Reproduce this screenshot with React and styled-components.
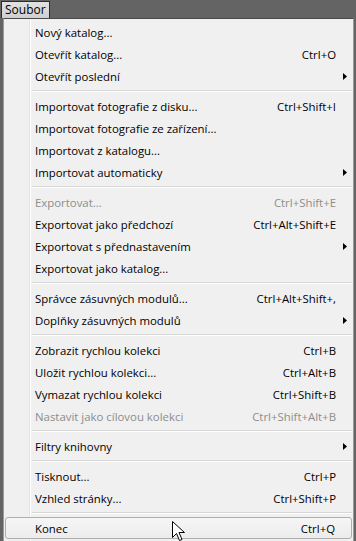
import React from "react";
import styled, { createGlobalStyle } from "styled-components";

const GlobalStyle = createGlobalStyle`
  html, body {
    margin: 0;
    padding: 0;
    background: #646464;
  }
`;

const SEP = "sep";

const items = [
  { label: "Nový katalog..." },
  { label: "Otevřít katalog...", shortcut: "Ctrl+O" },
  { label: "Otevřít poslední", sub: true },
  SEP,
  { label: "Importovat fotografie z disku...", shortcut: "Ctrl+Shift+I" },
  { label: "Importovat fotografie ze zařízení..." },
  { label: "Importovat z katalogu..." },
  { label: "Importovat automaticky", sub: true },
  SEP,
  { label: "Exportovat...", shortcut: "Ctrl+Shift+E", disabled: true },
  { label: "Exportovat jako předchozí", shortcut: "Ctrl+Alt+Shift+E" },
  { label: "Exportovat s přednastavením", sub: true },
  { label: "Exportovat jako katalog..." },
  SEP,
  { label: "Správce zásuvných modulů...", shortcut: "Ctrl+Alt+Shift+," },
  { label: "Doplňky zásuvných modulů", sub: true },
  SEP,
  { label: "Zobrazit rychlou kolekci", shortcut: "Ctrl+B" },
  { label: "Uložit rychlou kolekci...", shortcut: "Ctrl+Alt+B" },
  { label: "Vymazat rychlou kolekci", shortcut: "Ctrl+Shift+B" },
  { label: "Nastavit jako cílovou kolekci", shortcut: "Ctrl+Shift+Alt+B", disabled: true },
  SEP,
  { label: "Filtry knihovny", sub: true },
  SEP,
  { label: "Tisknout...", shortcut: "Ctrl+P" },
  { label: "Vzhled stránky...", shortcut: "Ctrl+Shift+P" },
  SEP,
  { label: "Konec", shortcut: "Ctrl+Q", hover: true },
];

function Arrow() {
  return (
    <svg width="4" height="7" viewBox="0 0 4 7">
      <path d="M0 0 L4 3.5 L0 7 Z" fill="#000" />
    </svg>
  );
}

function Cursor() {
  return (
    <svg width="13" height="21" viewBox="0 0 13 21">
      <path
        d="M0.5 0.5 L0.5 16.5 L4.5 12.5 L7.5 19.5 L10 18.5 L7 11.5 L12.5 11.5 Z"
        fill="#fff"
        stroke="#000"
        strokeWidth="1"
        strokeLinejoin="miter"
      />
    </svg>
  );
}

export default function App() {
  return (
    <>
      <GlobalStyle />
      <Frame>
        <TabBar>
          <Tab>Soubor</Tab>
        </TabBar>
        <Menu>
          {items.map((item, i) =>
            item === SEP ? (
              <Separator key={i} />
            ) : (
              <Row key={i} $disabled={item.disabled} $hover={item.hover}>
                <Label>{item.label}</Label>
                <Shortcut>{item.shortcut}</Shortcut>
                <SubMark>{item.sub && <Arrow />}</SubMark>
                {item.hover && (
                  <Pointer>
                    <Cursor />
                  </Pointer>
                )}
              </Row>
            )
          )}
        </Menu>
      </Frame>
    </>
  );
}

const Frame = styled.div`
  width: 356px;
  height: 541px;
  box-sizing: border-box;
  background: #646464;
  padding: 1px 2px 0 2px;
  font: 11.4px "Open Sans", "Liberation Sans", sans-serif;
  color: #000;
  overflow: hidden;
`;

const TabBar = styled.div`
  display: flex;
  height: 17px;
`;

const Tab = styled.div`
  box-sizing: border-box;
  height: 17px;
  padding: 0 3px 0 3px;
  margin-left: -1px;
  border: 1px solid #2c2c2c;
  border-bottom: none;
  background: linear-gradient(#e2e2e2, #cfcfcf);
  font-size: 12px;
  line-height: 15px;
  color: #000;
`;

const Menu = styled.div`
  box-sizing: border-box;
  margin-left: 1px;
  width: 351px;
  padding: 2px 1px 2px 1px;
  border: 1px solid #9a9a9a;
  border-top-color: #4a4a4a;
  background:
    linear-gradient(to right, transparent 25px, #e2e3e3 25px, #e2e3e3 26px, #ffffff 26px, #ffffff 27px, transparent 27px),
    #f0f0f0;
  display: flex;
  flex-direction: column;
`;

const Row = styled.div`
  position: relative;
  display: grid;
  grid-template-columns: 1fr auto 16px;
  align-items: center;
  height: 22px;
  box-sizing: border-box;
  padding-left: 30px;
  color: ${(p) => (p.$disabled ? "#8d8d8d" : "#000")};
  ${(p) =>
    p.$hover &&
    `
    border: 1px solid #aeaeae;
    border-radius: 3px;
    background: linear-gradient(#f6f6f6, #ececec);
    padding-left: 29px;
  `}
`;

const Label = styled.span`
  white-space: nowrap;
`;

const Shortcut = styled.span`
  white-space: nowrap;
  text-align: right;
`;

const SubMark = styled.span`
  display: flex;
  justify-content: center;
  align-items: center;
  padding-left: 2px;
`;

const Separator = styled.div`
  height: 8px;
  margin-left: 27px;
  background: linear-gradient(
    transparent 3px,
    #d7d7d7 3px,
    #d7d7d7 4px,
    #ffffff 4px,
    #ffffff 5px,
    transparent 5px
  );
`;

const Pointer = styled.div`
  position: absolute;
  left: 166px;
  top: 3px;
  line-height: 0;
`;
